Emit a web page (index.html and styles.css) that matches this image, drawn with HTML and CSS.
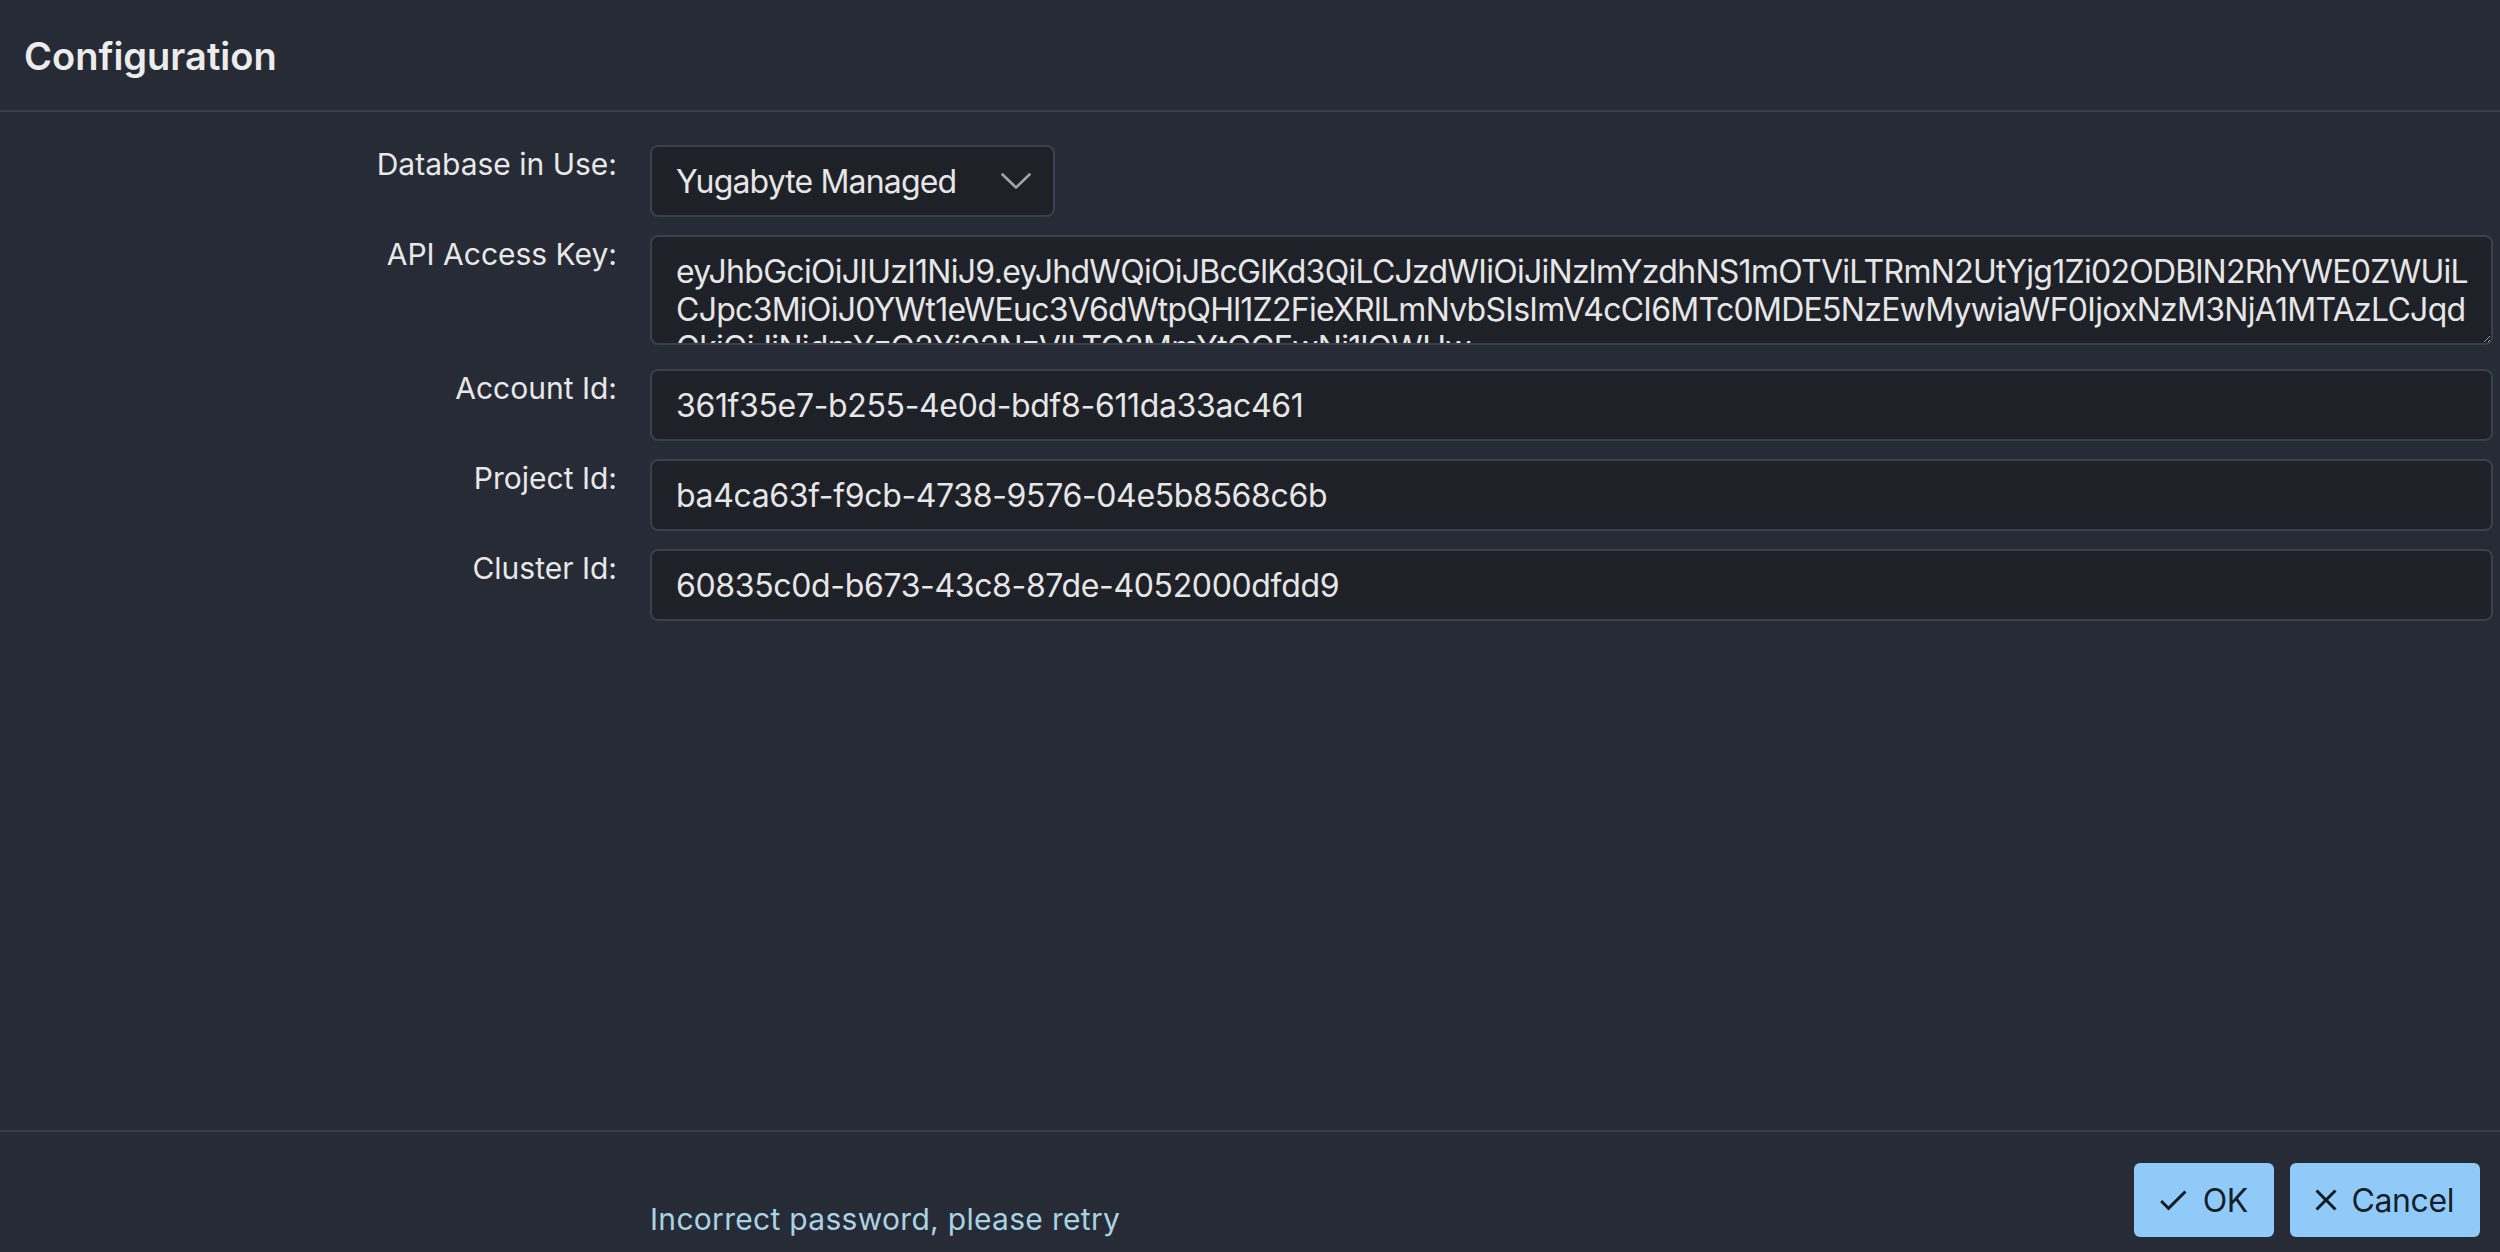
FILE: index.html
```html
<!DOCTYPE html>
<html lang="en">
<head>
<meta charset="utf-8">
<title>Configuration</title>
<link rel="stylesheet" href="styles.css">
</head>
<body>
<div class="app">
  <header class="header">
    <h1 class="title">Configuration</h1>
  </header>
  <main class="form">
    <label class="label" for="db">Database in Use:</label>
    <div class="field">
      <div class="select-wrap">
        <select id="db" class="select">
          <option>Yugabyte Managed</option>
        </select>
        <svg class="chevron" viewBox="0 0 30 16" width="30" height="16" aria-hidden="true"><polyline points="1.5,1.5 15,14.5 28.5,1.5" fill="none" stroke="#a3a3a3" stroke-width="2.6" stroke-linecap="round" stroke-linejoin="round"/></svg>
      </div>
    </div>

    <label class="label" for="key">API Access Key:</label>
    <div class="field field-area">
      <textarea id="key" class="textarea" readonly spellcheck="false">eyJhbGciOiJIUzI1NiJ9.eyJhdWQiOiJBcGlKd3QiLCJzdWIiOiJiNzlmYzdhNS1mOTViLTRmN2UtYjg1Zi02ODBlN2RhYWE0ZWUiL
CJpc3MiOiJ0YWt1eWEuc3V6dWtpQHl1Z2FieXRlLmNvbSIsImV4cCI6MTc0MDE5NzEwMywiaWF0IjoxNzM3NjA1MTAzLCJqd
GkiOiJiNjdmYzQ2Yi02NzVlLTQ2MmYtOGEwNi1lOWUw
ZDk4YzEifQ.Fq3kR2x9WmZpLtVbN7cYs0aQeHuJ4dKoP1gXvI8rTnE</textarea>
    </div>

    <label class="label" for="acc">Account Id:</label>
    <div class="field">
      <input id="acc" class="input" type="text" value="361f35e7-b255-4e0d-bdf8-611da33ac461" readonly>
    </div>

    <label class="label" for="proj">Project Id:</label>
    <div class="field">
      <input id="proj" class="input" type="text" value="ba4ca63f-f9cb-4738-9576-04e5b8568c6b" readonly>
    </div>

    <label class="label" for="clu">Cluster Id:</label>
    <div class="field">
      <input id="clu" class="input" type="text" value="60835c0d-b673-43c8-87de-4052000dfdd9" readonly>
    </div>
  </main>
  <footer class="footer">
    <div class="message">Incorrect password, please retry</div>
    <div class="actions">
      <button class="btn" type="button">
        <svg class="btn-icon icon-check" viewBox="0 0 24 24" aria-hidden="true"><path d="M9 16.17 4.83 12l-1.42 1.41L9 19 21 7l-1.41-1.41z"/></svg>
        <span>OK</span>
      </button>
      <button class="btn" type="button">
        <svg class="btn-icon icon-close" viewBox="0 0 24 24" aria-hidden="true"><path d="M19 6.41 17.59 5 12 10.59 6.41 5 5 6.41 10.59 12 5 17.59 6.41 19 12 13.41 17.59 19 19 17.59 13.41 12z"/></svg>
        <span>Cancel</span>
      </button>
    </div>
  </footer>
</div>
</body>
</html>
```

FILE: styles.css
```css
:root {
  color-scheme: dark;
}

* {
  box-sizing: border-box;
}

html, body {
  margin: 0;
  padding: 0;
}

body {
  background: #262b36;
  color: #e6e6e6;
  font-family: Inter, "Noto Sans", "Liberation Sans", sans-serif;
}

.app {
  height: 100vh;
  display: flex;
  flex-direction: column;
}

.header {
  height: 112px;
  display: flex;
  align-items: center;
  padding: 2px 0 0 24px;
  border-bottom: 2px solid #373e4b;
}

.title {
  margin: 0;
  font-size: 38px;
  font-weight: 600;
  line-height: 46px;
  color: #ececec;
}

.form {
  flex: 1;
  display: grid;
  grid-template-columns: 617px 1fr;
  column-gap: 33px;
  row-gap: 18px;
  align-content: start;
  padding: 33px 7px 0 0;
}

.label {
  text-align: right;
  font-size: 30px;
  line-height: 36px;
  padding-top: 1px;
  color: #e8e8e8;
}

.field {
  min-width: 0;
}

.field-area {
  margin-bottom: 6px;
}

.select-wrap {
  position: relative;
  width: 405px;
}

.select {
  appearance: none;
  -webkit-appearance: none;
  display: block;
  width: 100%;
  height: 72px;
  margin: 0;
  padding: 0 70px 0 24px;
  background: #1f2128;
  color: #e6e6e6;
  border: 2px solid #3a404c;
  border-radius: 8px;
  font-family: inherit;
  font-size: 32px;
  letter-spacing: -0.85px;
  outline: none;
}

.chevron {
  position: absolute;
  right: 24px;
  top: 28px;
  pointer-events: none;
}

.textarea {
  display: block;
  width: 100%;
  height: 110px;
  margin: 0;
  padding: 16px 24px;
  background: #1f2128;
  color: #e6e6e6;
  border: 2px solid #3a404c;
  border-radius: 8px;
  font-family: inherit;
  font-size: 32px;
  line-height: 38px;
  letter-spacing: -0.72px;
  white-space: pre;
  overflow: hidden;
  resize: vertical;
  outline: none;
}

.input {
  display: block;
  width: 100%;
  height: 72px;
  margin: 0;
  padding: 0 24px;
  background: #1f2128;
  color: #e6e6e6;
  border: 2px solid #3a404c;
  border-radius: 8px;
  font-family: inherit;
  font-size: 32px;
  letter-spacing: -0.35px;
  outline: none;
}

.footer {
  display: grid;
  grid-template-columns: 617px 1fr auto;
  column-gap: 33px;
  align-items: end;
  border-top: 2px solid #373e4b;
  padding: 31px 20px 15px 0;
}

.message {
  grid-column: 2;
  font-size: 30px;
  line-height: 36px;
  letter-spacing: 0.3px;
  color: #a9d3e4;
}

.actions {
  grid-column: 3;
  display: flex;
  gap: 16px;
}

.btn {
  display: flex;
  align-items: center;
  height: 74px;
  padding: 0 26px 0 20px;
  border: none;
  border-radius: 6px;
  background: #90caf9;
  color: rgba(0, 0, 0, 0.87);
  font-family: inherit;
  font-size: 32px;
  font-weight: 400;
  letter-spacing: -0.4px;
  cursor: pointer;
}

.btn-icon {
  width: 36px;
  height: 36px;
  fill: currentColor;
  flex: none;
}

.icon-check {
  margin: 0 12px 0 1px;
}

.icon-close {
  margin: 0 7px 0 -1.5px;
}
```
